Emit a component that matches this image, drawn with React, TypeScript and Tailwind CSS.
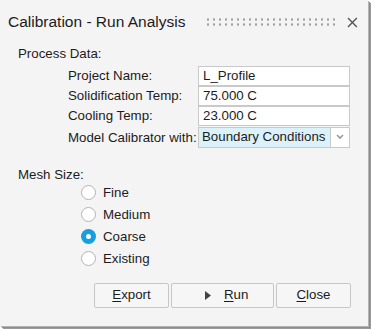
import { useState } from "react";

const fields = [
  { label: "Project Name:", value: "L_Profile" },
  { label: "Solidification Temp:", value: "75.000 C" },
  { label: "Cooling Temp:", value: "23.000 C" },
];

const meshSizes = ["Fine", "Medium", "Coarse", "Existing"];

const App = () => {
  const [mesh, setMesh] = useState("Coarse");

  return (
    <div className="w-[371px] h-[329px] bg-white font-['Liberation_Sans',Arial,sans-serif] text-[#1c1c1c]">
      <div className="w-[368px] h-[326px] bg-[#f4f4f4] flex flex-col shadow-[1px_1px_0_#b4b4b4,2px_2px_0_#8c8c8c,3px_3px_1px_#9a9a9a]">
        {/* Title bar */}
        <div className="h-[40px] flex items-center pt-[4px] pl-[8px] pr-[10px]">
          <span className="text-[15.5px] leading-none whitespace-nowrap">Calibration - Run Analysis</span>
          <div className="ml-[20px] w-[132px] h-[10px] bg-[radial-gradient(circle,#a0a0a0_1px,transparent_1.3px)] bg-[length:6px_5px]" />
          <svg className="ml-[12px]" width="11" height="11" viewBox="0 0 11 11">
            <path d="M1 1L10 10M10 1L1 10" stroke="#555" strokeWidth="1.4" />
          </svg>
        </div>

        {/* Process data */}
        <div className="pl-[18px] text-[13.3px] leading-none mt-[7px]">Process Data:</div>
        <div className="mt-[6px] flex flex-col">
          {fields.map((f) => (
            <div key={f.label} className="flex items-center h-[20px] pl-[68px] text-[13.3px]">
              <span className="w-[130px] whitespace-nowrap">{f.label}</span>
              <div className="w-[152px] h-[20px] bg-white border border-[#c9c9c9] -mt-px flex items-center px-[4px] whitespace-nowrap">
                {f.value}
              </div>
            </div>
          ))}
          <div className="flex items-center h-[21px] pl-[68px] text-[13.3px] mt-px">
            <span className="w-[130px] whitespace-nowrap">Model Calibrator with:</span>
            <div className="w-[152px] h-[21px] flex border border-[#c9c9c9] -mt-px">
              <div className="flex-1 bg-[#dbf2fb] flex items-center px-[3px] whitespace-nowrap border-r border-[#c9c9c9]">
                Boundary Conditions
              </div>
              <div className="w-[18px] bg-white flex items-center justify-center">
                <svg width="8" height="6" viewBox="0 0 8 6">
                  <path d="M1 1L4 4L7 1" stroke="#9a9a9a" strokeWidth="1.6" fill="none" />
                </svg>
              </div>
            </div>
          </div>
        </div>

        {/* Mesh size */}
        <div className="pl-[18px] text-[13.3px] leading-none mt-[20px]">Mesh Size:</div>
        <div className="flex flex-col pl-[81px]">
          {meshSizes.map((m) => (
            <label key={m} className="flex items-center h-[22px] text-[13.3px] cursor-pointer" onClick={() => setMesh(m)}>
              {mesh === m ? (
                <span className="w-[15px] h-[15px] rounded-full bg-[#14a0e0] flex items-center justify-center">
                  <span className="w-[5px] h-[5px] rounded-full bg-white" />
                </span>
              ) : (
                <span className="w-[15px] h-[15px] rounded-full bg-white border-[1.5px] border-[#b3b3b3]" />
              )}
              <span className="ml-[7px]">{m}</span>
            </label>
          ))}
        </div>

        {/* Buttons */}
        <div className="mt-[13px] pl-[94px] flex gap-[2px] text-[13.3px]">
          <button className="w-[75px] h-[25px] rounded-[2px] border border-[#c6c6c6] bg-[#f6f6f6]">
            <span className="underline underline-offset-2">E</span>xport
          </button>
          <button className="w-[103px] h-[25px] rounded-[2px] border border-[#c6c6c6] bg-[#f6f6f6] flex items-center pl-[33px]">
            <svg width="6" height="9" viewBox="0 0 6 9" className="mr-[13px]">
              <path d="M0 0L6 4.5L0 9Z" fill="#444" />
            </svg>
            <span>
              <span className="underline underline-offset-2">R</span>un
            </span>
          </button>
          <button className="w-[75px] h-[25px] rounded-[2px] border border-[#c6c6c6] bg-[#f6f6f6]">
            <span className="underline underline-offset-2">C</span>lose
          </button>
        </div>
      </div>
    </div>
  );
};

export default App;
